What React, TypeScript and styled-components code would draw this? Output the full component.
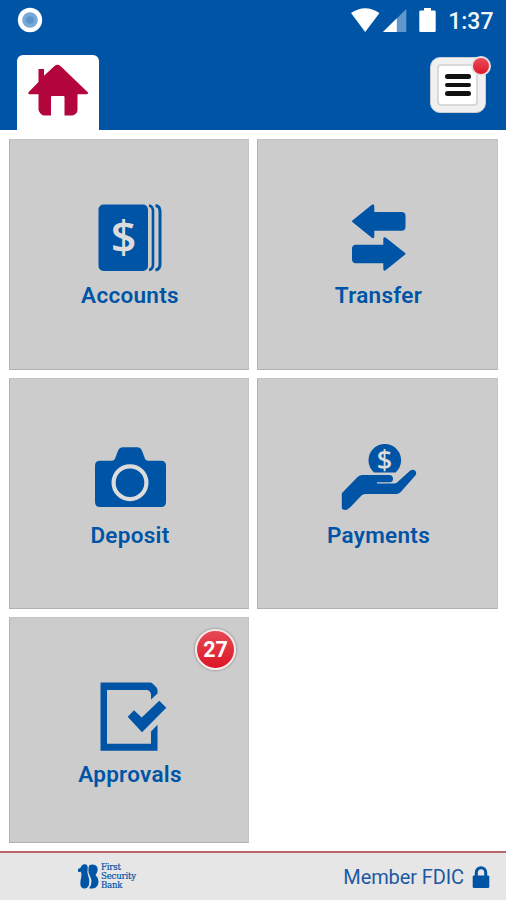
import React from "react";
import styled, { createGlobalStyle } from "styled-components";

const BLUE = "#0054a6";
const GREY = "#cccccc";

const Global = createGlobalStyle`
  * { box-sizing: border-box; }
  body { margin: 0; background: #fff; font-family: Roboto, "Liberation Sans", sans-serif; }
`;

const Screen = styled.div`
  width: 506px;
  height: 900px;
  display: flex;
  flex-direction: column;
  overflow: hidden;
  background: #fff;
`;

const Header = styled.header`
  height: 130px;
  background: ${BLUE};
  display: flex;
  flex-direction: column;
  justify-content: space-between;
`;

const StatusBar = styled.div`
  height: 40px;
  display: flex;
  align-items: center;
  justify-content: space-between;
  padding: 0 12.5px 0 17px;
`;

const StatusGroup = styled.div`
  display: flex;
  align-items: center;
`;

const Clock = styled.span`
  margin-left: 11px;
  font-size: 23px;
  line-height: 40px;
  font-weight: 500;
  color: #f4f8fc;
  padding-top: 3px;
`;

const NavBar = styled.nav`
  height: 75px;
  display: flex;
  justify-content: space-between;
  padding: 0 20px 0 16.5px;
`;

const HomeTab = styled.div`
  width: 82.5px;
  height: 75px;
  background: #fff;
  border-radius: 6px 6px 0 0;
  display: flex;
  justify-content: center;
  padding-top: 8px;
`;

const MenuButton = styled.div`
  position: relative;
  width: 56px;
  height: 56px;
  margin-top: 2px;
  border-radius: 10px;
  border: 1px solid #c9ced4;
  background: #f0f0f0;
  padding: 6px;
`;

const MenuFace = styled.div`
  width: 41px;
  height: 42px;
  border-radius: 4px;
  border: 2px solid #d9d9d9;
  background: #fff;
  display: flex;
  flex-direction: column;
  align-items: center;
  justify-content: center;
  gap: 4px;
`;

const MenuLine = styled.span`
  width: 26px;
  height: 4.5px;
  border-radius: 3px;
  background: #111;
`;

const Dot = styled.span`
  position: absolute;
  top: -2px;
  right: -6px;
  width: 20px;
  height: 20px;
  border-radius: 50%;
  border: 2px solid #e6e0e6;
  background: linear-gradient(#e94c57, #dd1a2b);
`;

const Grid = styled.main`
  height: 713px;
  padding: 9px 8px 0 9px;
  display: grid;
  grid-template-columns: 240px 241px;
  grid-template-rows: 231px 231px 226px;
  gap: 8.2px 8px;
`;

const TileBox = styled.section`
  position: relative;
  background: ${GREY};
  border: 1px solid #c4c4c4;
  border-left-color: #b2b2b2;
  border-bottom-color: #b0b0b0;
  display: flex;
  flex-direction: column;
  align-items: center;
  padding-top: 59px;
`;

const Label = styled.span`
  margin-top: 3.4px;
  margin-left: 2px;
  font-size: 22.5px;
  line-height: 26px;
  font-weight: 600;
  letter-spacing: 0.3px;
  color: ${BLUE};
`;

const Badge = styled.span`
  position: absolute;
  top: 11px;
  right: 12px;
  width: 41px;
  height: 41px;
  border-radius: 50%;
  border: 2.5px solid #f6e9e9;
  background: linear-gradient(#e64b56, #dc1426);
  box-shadow: 0 0 2px 1px rgba(90, 90, 90, 0.35);
  display: flex;
  align-items: center;
  justify-content: center;
  font-size: 21.5px;
  font-weight: 700;
  color: #fff;
`;

const Footer = styled.footer`
  flex: 1;
  margin-top: 8px;
  border-top: 2px solid #b9676e;
  background: #e6e6e6;
  display: flex;
  align-items: center;
  justify-content: space-between;
  padding: 0 16px 0 77px;
`;

const Brand = styled.div`
  display: flex;
  align-items: center;
  gap: 1px;
`;

const BrandName = styled.div`
  font-family: "DejaVu Serif", serif;
  font-size: 8.6px;
  line-height: 8.7px;
  letter-spacing: -0.2px;
  color: ${BLUE};
  -webkit-text-stroke: 0.2px ${BLUE};
`;

const Member = styled.div`
  display: flex;
  align-items: center;
  gap: 8px;
  font-size: 20px;
  letter-spacing: -0.1px;
  color: #1d58a3;
`;

const Art = ({ children }: { children: React.ReactNode }) => (
  <svg width="120" height="80" viewBox="0 0 120 80" fill={BLUE}>
    {children}
  </svg>
);

const AccountsIcon = () => (
  <Art>
    <rect x="29.500" y="5.500" width="49.500" height="66.500" rx="5" />
    <g fill="none" stroke={BLUE} strokeWidth="2.600">
      <path d="M80 6.500q4 .8 4 5.800v53q0 5-4 5.800" />
      <path d="M86.500 6.500q4.500 .8 4.500 5.800v53q0 5-4.500 5.800" strokeWidth="3" />
    </g>
    <text x="54.600" y="54" fontFamily="Open Sans" fontWeight="600" fontSize="45" textAnchor="middle" fill="#dcdcdc">$</text>
  </Art>
);

const TransferIcon = () => (
  <Art>
    <g stroke={BLUE} strokeWidth="2" strokeLinejoin="round">
      <path d="M35 22.300 54.500 6.500q.8-.4.8.8V14H83.500q3 0 3 3v10.700q0 3-3 3H55.300v6.800q0 1-.8.5z" />
      <path d="M86.500 54.700 67 39.300q-.7-.4-.7.6v6.800H38q-3 0-3 3v10.600q0 3 3 3h28.300v6.700q0 1 .7.5z" />
    </g>
  </Art>
);

const DepositIcon = () => (
  <Art>
    <path d="M31 22.700h12q2 0 3-2l3-8q1.500-3.400 5-3.400h14q3.500 0 5 3.400l3 8q1 2 3 2h13q5 0 5 5V64q0 5-5 5H31q-5 0-5-5V27.700q0-5 5-5z" />
    <circle cx="61" cy="44.700" r="16.400" fill="none" stroke="#dcdcdc" strokeWidth="4.200" />
  </Art>
);

const PaymentsIcon = () => (
  <Art>
    <path d="M56 34.500a16.300 16.300 0 1 1 21.600 0z" />
    <text x="66.500" y="32" fontFamily="Open Sans" fontWeight="600" fontSize="27" textAnchor="middle" fill="#dcdcdc">$</text>
    <path d="M23.800 55.300 39.500 39q2-2 5-2H71q4 .3 4 3.800 0 3-2.500 3.500H59v1.200h17.500q1.500 0 2.500-1L92 32.800q3-2 5.300 0 1.800 2.400 0 4.700L82.500 54.200q-1.800 1.800-4 1.800H47q-2 0-3.500 1.500L32 69.500Q28.500 73 25 71.500q-1.200-.6-1.200-2z" />
  </Art>
);

const ApprovalsIcon = () => (
  <Art>
    <path d="M31.500 5.500H81q1.500 0 2.500 1l4 4q1 1 1 2.500v3.500L82 22.500V18q0-2.500-1.500-3.700Q79.500 13 77.500 13H38v53.700H82V54.500l6.500-6.700v26H31.500z" />
    <path d="m58.700 39.700 6.300-6.500 7.700 7.200L90.300 23.700l7 7L73 55.300z" />
  </Art>
);

const HomeIcon = () => (
  <svg width="62" height="54" viewBox="0 0 62 54" fill="#b3063c">
    <path d="M11.500 6H17v6.800L27.500 3q3-2.500 6 0L61 29.500q.5 1.700-1.500 1.700H50.500V47q0 2-1.500 3.500T45.500 52.500H37.500V34q0-1-1-1H25q-1 0-1 1V52.500H17q-2 0-3.500-2T11.500 47V31.200H3q-2.300 0-1.500-2L11.500 19z" />
  </svg>
);

const Tile = ({ label, icon, count }: { label: string; icon: React.ReactNode; count?: number }) => (
  <TileBox>
    {icon}
    <Label>{label}</Label>
    {count !== undefined && <Badge>{count}</Badge>}
  </TileBox>
);

export default function App() {
  return (
    <Screen>
      <Global />
      <Header>
        <StatusBar>
          <svg width="26" height="26" viewBox="0 0 26 26">
            <circle cx="13" cy="13" r="12.200" fill="#fff" />
            <circle cx="13" cy="13" r="7.800" fill="#78a8d8" />
            <circle cx="13" cy="13" r="3.800" fill="#5b92c9" />
          </svg>
          <StatusGroup>
            <svg width="86" height="26" viewBox="0 0 86 26" fill="#fff">
              <path d="M0 6Q14.200-3.500 28.500 6L14.200 25z" />
              <path d="M55.300 2v23H32z" fill="#5e98cd" />
              <path d="M45.800 11.300V25H32z" />
              <path d="M73 1h7v2.500h3.500q1.200 0 1.200 1.200v19.100q0 1.200-1.200 1.200h-14q-1.200 0-1.200-1.200V4.700q0-1.200 1.200-1.200H73z" />
            </svg>
            <Clock>1:37</Clock>
          </StatusGroup>
        </StatusBar>
        <NavBar>
          <HomeTab><HomeIcon /></HomeTab>
          <MenuButton>
            <MenuFace>
              <MenuLine />
              <MenuLine />
              <MenuLine />
            </MenuFace>
            <Dot />
          </MenuButton>
        </NavBar>
      </Header>
      <Grid>
        <Tile label="Accounts" icon={<AccountsIcon />} />
        <Tile label="Transfer" icon={<TransferIcon />} />
        <Tile label="Deposit" icon={<DepositIcon />} />
        <Tile label="Payments" icon={<PaymentsIcon />} />
        <Tile label="Approvals" icon={<ApprovalsIcon />} count={27} />
      </Grid>
      <Footer>
        <Brand>
          <svg width="23" height="27" viewBox="0 0 23 27" fill={BLUE}>
            <path d="M1 6Q4 5 5 2.200q2-1.500 4.500-.7Q11 3 10.600 6.500q-.4 2.500 .2 5 1.700 4 1.500 8-.3 5.500-4.500 6-4.300.3-4.500-5 0-3.500 1-6.500.6-3-.5-5.500Q2.500 9.500 1 8.500z" />
            <path d="M12.200 2.200Q16 .8 18.800 2.500q2.500 2 1.700 5.500-.5 2.300-2 4 2.800 2.500 3 6.500 0 6-5.500 7-2 .3-4-.2 2.700-3 2.500-7-.2-3-1.800-5.800-1.500-2.500-1.300-5.500 .1-2.500 .8-4.800z" />
          </svg>
          <BrandName>
            <div>First</div>
            <div>Security</div>
            <div>Bank</div>
          </BrandName>
        </Brand>
        <Member>
          <span>Member FDIC</span>
          <svg width="18" height="24" viewBox="0 0 18 24">
            <path d="M4.300 11V7.500a4.700 4.700 0 0 1 9.400 0V11" fill="none" stroke={BLUE} strokeWidth="3" />
            <rect x="0.700" y="10.500" width="16.600" height="12.500" rx="1.300" fill={BLUE} />
          </svg>
        </Member>
      </Footer>
    </Screen>
  );
}
